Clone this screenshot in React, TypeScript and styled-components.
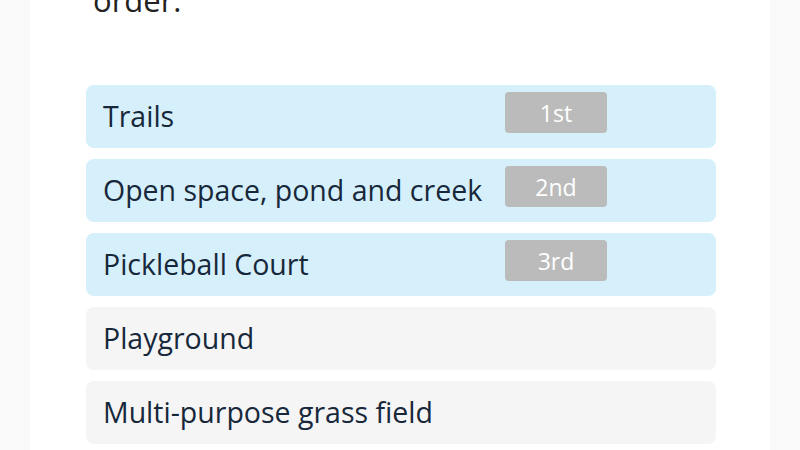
import React from "react";
import styled, { createGlobalStyle } from "styled-components";

const GlobalStyle = createGlobalStyle`
  html, body {
    margin: 0;
    padding: 0;
    background: #f9f9f9;
    font-family: "Open Sans", "Noto Sans", sans-serif;
    overflow: hidden;
  }
`;

const Page = styled.div`
  height: 450px;
  display: flex;
  padding: 0 30px 0 30px;
`;

const Card = styled.main`
  flex: 1;
  background: #ffffff;
  padding: 0 54px 0 56px;
  display: flex;
  flex-direction: column;
`;

const Question = styled.h2`
  margin: -18px 0 0 7px;
  font-size: 31px;
  line-height: 36px;
  font-weight: 400;
  color: #222;
`;

const RankList = styled.ul`
  list-style: none;
  margin: 67px 0 0 0;
  padding: 0;
  display: flex;
  flex-direction: column;
  gap: 11px;
`;

const Row = styled.li<{ $ranked: boolean }>`
  height: 63px;
  box-sizing: border-box;
  border-radius: 8px;
  background: ${(p) => (p.$ranked ? "#d5effb" : "#f5f5f5")};
  display: grid;
  grid-template-columns: 402px 102px;
  align-items: center;
  padding-left: 17px;
  color: #17283a;
  font-size: 28.5px;
`;

const Label = styled.span`
  white-space: nowrap;
  margin-top: -2px;
`;

const Badge = styled.span`
  height: 41px;
  margin-top: -8px;
  border-radius: 4px;
  background: #bbbbbb;
  color: #ffffff;
  font-size: 23px;
  display: flex;
  align-items: center;
  justify-content: center;
`;

const items = [
  { label: "Trails", rank: "1st" },
  { label: "Open space, pond and creek", rank: "2nd" },
  { label: "Pickleball Court", rank: "3rd" },
  { label: "Playground" },
  { label: "Multi-purpose grass field" },
];

const App: React.FC = () => {
  return (
    <>
      <GlobalStyle />
      <Page>
        <Card>
          <Question>order:</Question>
          <RankList>
            {items.map((it) => (
              <Row key={it.label} $ranked={!!it.rank}>
                <Label>{it.label}</Label>
                {it.rank && <Badge>{it.rank}</Badge>}
              </Row>
            ))}
          </RankList>
        </Card>
      </Page>
    </>
  );
};

export default App;
